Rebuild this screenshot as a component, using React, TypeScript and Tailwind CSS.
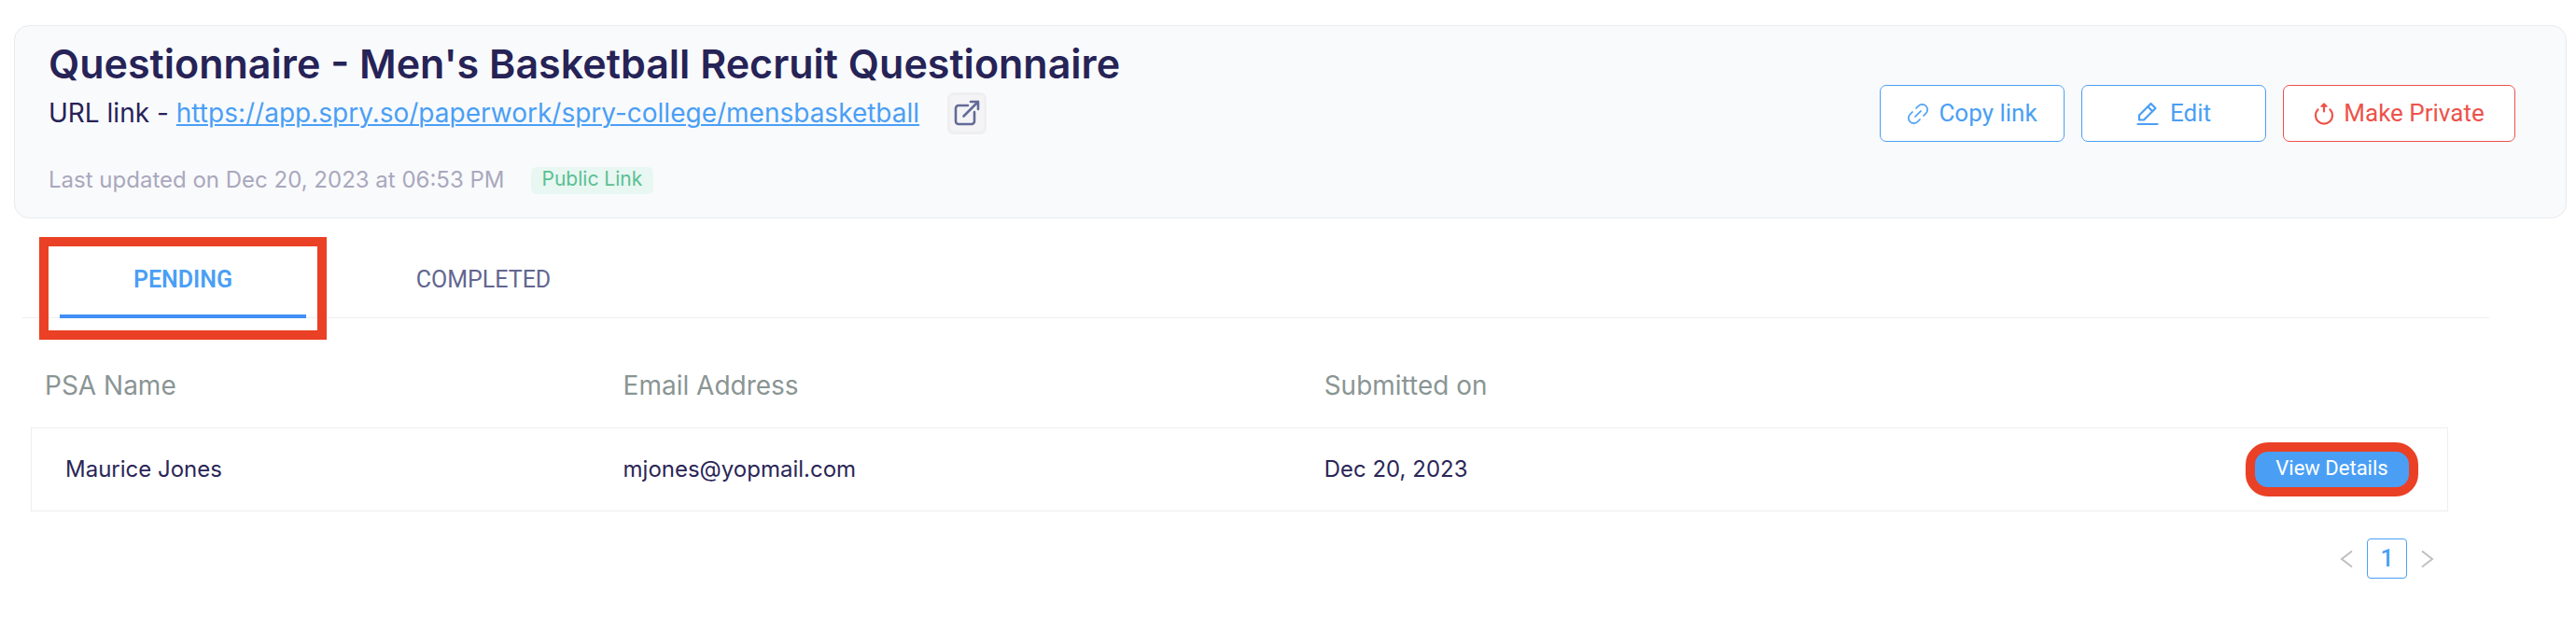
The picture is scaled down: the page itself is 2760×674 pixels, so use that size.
import { ReactNode, useState } from "react";

type Submission = {
  name: string;
  email: string;
  submittedOn: string;
};

const FORM_URL = "https://app.spry.so/paperwork/spry-college/mensbasketball";

const SUBMISSIONS: Submission[] = [
  { name: "Maurice Jones", email: "mjones@yopmail.com", submittedOn: "Dec 20, 2023" },
];

function ExternalIcon() {
  return (
    <svg width="30" height="30" viewBox="0 0 30 30" fill="none" stroke="#636a96" strokeWidth="2.600" strokeLinecap="round" strokeLinejoin="round">
      <path d="M16 7H6a3 3 0 0 0-3 3v14a3 3 0 0 0 3 3h14a3 3 0 0 0 3-3V14" />
      <path d="M11.500 18.500 27 3M19 3h8v8" />
    </svg>
  );
}

function LinkIcon() {
  return (
    <svg width="24" height="24" viewBox="0 0 24 24" fill="none" stroke="currentColor" strokeWidth="1.700">
      <path d="M9.500 6.500 12.500 3.500a5.600 5.600 0 0 1 8 8L17.500 14.500" />
      <path d="M14.500 17.500 11.500 20.500a5.600 5.600 0 0 1-8-8L6.500 9.500" />
      <path d="m8.500 15.500 7-7" />
    </svg>
  );
}

function EditIcon() {
  return (
    <svg width="24" height="26" viewBox="0 0 24 26" fill="none" stroke="currentColor" strokeWidth="2.200" strokeLinecap="round" strokeLinejoin="round">
      <path d="M3 19.500v-5L15.500 2l5 5L8 19.500z" />
      <path d="m12.500 5.500 4.500 4.500" />
      <path d="M1.500 24h21" />
    </svg>
  );
}

function RevokeIcon() {
  return (
    <svg width="22" height="26" viewBox="0 0 22 26" fill="none" stroke="currentColor" strokeWidth="2.200" strokeLinecap="round" strokeLinejoin="round">
      <path d="M4.600 8.300a9 9 0 1 0 12.800 0" />
      <path d="M11 10.500V3" />
      <path d="M8 5 11 2l3 3z" fill="currentColor" strokeWidth="1.500" />
    </svg>
  );
}

function Chevron({ d }: { d: string }) {
  return (
    <svg width="14" height="20" viewBox="0 0 14 20" fill="none" stroke="#bfbfbf" strokeWidth="2">
      <path d={d} />
    </svg>
  );
}

function ActionButton({ icon, label, className }: { icon: ReactNode; label: string; className: string }) {
  return (
    <button
      type="button"
      className={`flex h-[61px] items-center justify-center rounded-[7px] border bg-white text-[26px] ${className}`}
    >
      {icon}
      {label}
    </button>
  );
}

function FormHeader() {
  return (
    <header className="flex items-start justify-between rounded-2xl border border-[#e9eaed] bg-[#f9fafc] pt-[14px] pr-[54px] pb-[22px] pl-9">
      <div className="font-[Inter,sans-serif]">
        <h1 className="text-[43px] leading-[52px] font-semibold text-[#262357]">
          Questionnaire - Men's Basketball Recruit Questionnaire
        </h1>
        <div className="flex items-center text-[28px] leading-[54px] text-[#262357]">
          <span className="mr-2">URL link -</span>
          <a href={FORM_URL} className="text-[#4a9ff5] underline decoration-2 underline-offset-2">
            {FORM_URL}
          </a>
          <button
            type="button"
            aria-label="Open form"
            className="ml-[30px] flex h-[45px] w-[42px] items-center justify-center rounded-[7px] border-3 border-[#efefef] bg-[#f4f4f6]"
          >
            <ExternalIcon />
          </button>
        </div>
        <div className="mt-[27px] flex items-center gap-7 text-[24px] leading-9 text-[#a9a8bd]">
          <p>Last updated on Dec 20, 2023 at 06:53 PM</p>
          <span className="rounded-md bg-[#e8f7f2] px-3 pb-1 text-[21px] leading-[25px] text-[#5bbf92]">Public Link</span>
        </div>
      </div>
      <div className="mt-[49px] flex gap-[18px]">
        <ActionButton icon={<LinkIcon />} label="Copy link" className="w-[198px] gap-[10px] border-[#4a9ff5] text-[#4a9ff5]" />
        <ActionButton icon={<EditIcon />} label="Edit" className="w-[198px] gap-3 border-[#4a9ff5] text-[#4a9ff5]" />
        <ActionButton icon={<RevokeIcon />} label="Make Private" className="w-[249px] gap-[10px] border-[#ed5249] text-[#ed5249]" />
      </div>
    </header>
  );
}

function Tabs({ active, onSelect }: { active: string; onSelect: (tab: string) => void }) {
  return (
    <div role="tablist" className="mr-[93px] ml-6 flex gap-[58px] border-b border-[#eeeeee] pl-10 text-[25px]">
      {["PENDING", "COMPLETED"].map((tab) => (
        <button
          key={tab}
          type="button"
          role="tab"
          aria-selected={tab === active}
          onClick={() => onSelect(tab)}
          className={`relative -mb-px h-[87px] w-[264px] border-b-4 pt-2 ${
            tab === active ? "border-[#4090f7] font-semibold text-[#4a9ff5]" : "border-transparent text-[#62668f]"
          }`}
        >
          {tab}
          {/* highlight marker around the current tab */}
          {tab === active && <span className="absolute -inset-x-[22px] top-0 -bottom-[27px] border-10 border-[#ea4025]" />}
        </button>
      ))}
    </div>
  );
}

function SubmissionsTable({ rows }: { rows: Submission[] }) {
  return (
    <table className="w-full table-fixed border-separate border-spacing-0 text-left font-[Inter,sans-serif]">
      <colgroup>
        <col className="w-[24.500%]" />
        <col className="w-[29%]" />
        <col />
        <col className="w-[10%]" />
      </colgroup>
      <thead>
        <tr className="h-[90px] text-[28px] text-[#8a9594]">
          <th className="pl-[15px] font-normal">PSA Name</th>
          <th className="font-normal">Email Address</th>
          <th className="font-normal">Submitted on</th>
          <th aria-label="Actions" />
        </tr>
      </thead>
      <tbody>
        {rows.map((row) => (
          <tr key={row.email} className="h-[90px] text-[24px] text-[#2a2657]">
            <td className="border-y border-l border-[#eeeeee] pl-9">{row.name}</td>
            <td className="border-y border-[#eeeeee]">{row.email}</td>
            <td className="border-y border-[#eeeeee]">{row.submittedOn}</td>
            <td className="border-y border-r border-[#eeeeee] pr-[31px]">
              <button
                type="button"
                className="ml-auto flex h-[58px] w-[185px] items-center justify-center rounded-3xl border-10 border-[#ea4025] bg-[#4a9ff5] pb-1 font-[Roboto,sans-serif] text-[22px] whitespace-nowrap text-white"
              >
                View Details
              </button>
            </td>
          </tr>
        ))}
      </tbody>
    </table>
  );
}

function Pagination() {
  return (
    <nav aria-label="Pages" className="mt-[29px] flex items-center justify-end gap-[15px] pr-[15px]">
      <button type="button" aria-label="Previous page">
        <Chevron d="M13 1.500 2 10l11 8.500" />
      </button>
      <button type="button" className="size-[43px] rounded border border-[#4a9ff5] text-[25px] leading-9 font-medium text-[#4a9ff5]">
        1
      </button>
      <button type="button" aria-label="Next page">
        <Chevron d="M1 1.500 12 10 1 18.500" />
      </button>
    </nav>
  );
}

export default function App() {
  const [tab, setTab] = useState("PENDING");

  return (
    <main className="min-h-screen bg-white pt-[27px] font-[Roboto,sans-serif]">
      <div className="mr-[10px] ml-[15px]">
        <FormHeader />
      </div>
      <div className="pt-5">
        <Tabs active={tab} onSelect={setTab} />
      </div>
      <section className="mt-[27px] mr-[137px] ml-[33px]">
        <SubmissionsTable rows={tab === "PENDING" ? SUBMISSIONS : []} />
        <Pagination />
      </section>
    </main>
  );
}
